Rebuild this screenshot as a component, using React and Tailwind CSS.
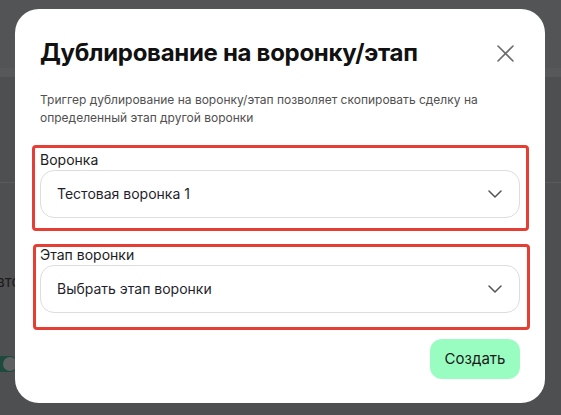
import React from "react";

function Chevron() {
  return (
    <svg width="14" height="8" viewBox="0 0 14 8" fill="none">
      <path d="M1 1L7 7L13 1" stroke="#555" strokeWidth="1.5" strokeLinecap="round" strokeLinejoin="round" />
    </svg>
  );
}

function Select({ value }) {
  return (
    <div className="flex h-[48px] items-center justify-between rounded-[14px] border border-[#dddddd] bg-white pl-[16px] pr-[17px]">
      <span className="text-[14px] leading-[20px] text-[#1f1f2e]">{value}</span>
      <Chevron />
    </div>
  );
}

export default function App() {
  return (
    <div className="relative h-[415px] w-[561px] overflow-hidden bg-[#4e4f51] font-['Inter',sans-serif]">
      {/* dimmed page underneath */}
      <div className="flex h-full flex-col">
        <div className="h-[68px] bg-[#535456]" />
        <div className="h-[9px] bg-[#57585a]" />
        <div className="h-[106px] border-b border-[#5a5b5d]" />
        <div className="pt-[86px]">
          <span className="-ml-[14px] text-[15px] leading-[20px] text-[#1c1c1c]">Авто</span>
        </div>
        <div className="pt-[63px]">
          <div className="-ml-[14px] flex h-[16px] w-[32px] items-center justify-end rounded-full bg-[#1d4a3b] pr-[1px]">
            <div className="h-[14px] w-[14px] rounded-full bg-[#5f6062]" />
          </div>
        </div>
      </div>

      {/* modal */}
      <div className="absolute left-[15px] top-[9px] flex h-[394px] w-[530px] flex-col rounded-[24px] bg-white px-[25px] pt-[28px]">
        <div className="flex items-center justify-between">
          <h1 className="text-[24px] font-bold leading-[32px] tracking-[-0.3px] text-[#111111]">
            Дублирование на воронку/этап
          </h1>
          <button className="mr-[6px] flex h-[18px] w-[18px] items-center justify-center">
            <svg width="17" height="17" viewBox="0 0 17 17" fill="none">
              <path d="M1 1L16 16M16 1L1 16" stroke="#6b6b6b" strokeWidth="1.6" strokeLinecap="round" />
            </svg>
          </button>
        </div>

        <p className="mt-[22px] text-[12px] leading-[18px] text-[#505050]">
          Триггер дублирование на воронку/этап позволяет скопировать сделку на
          <br />
          определенный этап другой воронки
        </p>

        <div className="-ml-[8px] -mr-[9px] mt-[18px] rounded-[4px] border-[3px] border-[#e53e34] pb-[10px] pl-[5px] pr-[6px] pt-[3px]">
          <div className="text-[14px] leading-[18px] text-[#1c1c1c]">Воронка</div>
          <div className="mt-[1px]">
            <Select value="Тестовая воронка 1" />
          </div>
        </div>

        <div className="-ml-[7px] -mr-[10px] mt-[13px] rounded-[4px] border-[3px] border-[#e53e34] pb-[14px] pl-[4px] pr-[7px]">
          <div className="text-[14px] leading-[16px] text-[#1c1c1c]">Этап воронки</div>
          <div className="mt-[2px]">
            <Select value="Выбрать этап воронки" />
          </div>
        </div>

        <div className="mt-[9px] flex justify-end">
          <button className="h-[40px] w-[90px] rounded-[12px] bg-[#99fdc2] text-[15px] leading-[20px] text-[#1a1a1a]">
            Создать
          </button>
        </div>
      </div>
    </div>
  );
}
